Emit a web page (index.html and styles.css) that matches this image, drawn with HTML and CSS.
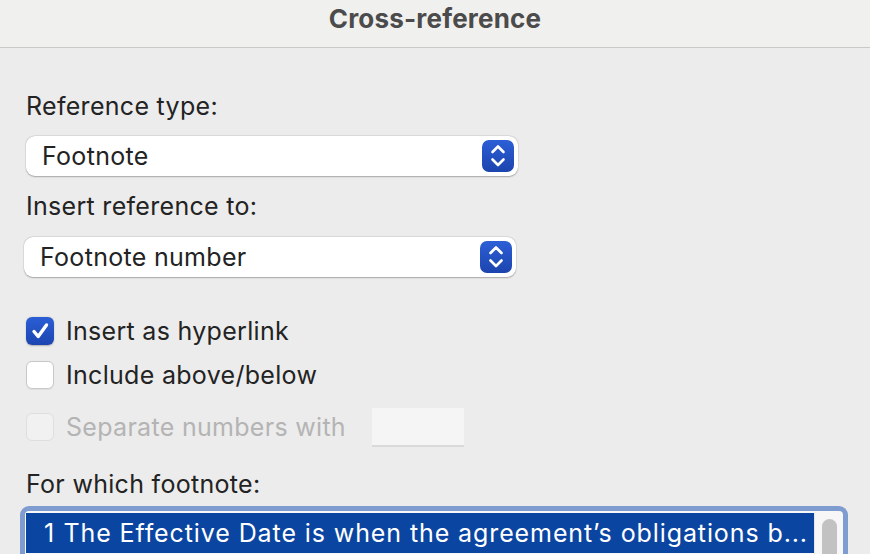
FILE: index.html
```html
<!DOCTYPE html>
<html lang="en">
<head>
<meta charset="utf-8">
<title>Cross-reference</title>
<link rel="stylesheet" href="styles.css">
</head>
<body>
<header class="titlebar">
  <h1 class="title">Cross-reference</h1>
</header>
<main class="content">
  <div class="label label-first">Reference type:</div>
  <div class="select select-1">
    <span class="select-value">Footnote</span>
    <span class="stepper">
      <svg viewBox="0 0 32 32" width="32" height="32"><path d="M10.5 12 L16 6.5 L21.5 12 M10.5 19.5 L16 25 L21.5 19.5" fill="none" stroke="#fff" stroke-width="2.6" stroke-linecap="round" stroke-linejoin="round"/></svg>
    </span>
  </div>
  <div class="label label-second">Insert reference to:</div>
  <div class="select select-2">
    <span class="select-value">Footnote number</span>
    <span class="stepper">
      <svg viewBox="0 0 32 32" width="32" height="32"><path d="M10.5 12 L16 6.5 L21.5 12 M10.5 19.5 L16 25 L21.5 19.5" fill="none" stroke="#fff" stroke-width="2.6" stroke-linecap="round" stroke-linejoin="round"/></svg>
    </span>
  </div>

  <div class="checks">
    <div class="check-row">
      <span class="box box-checked">
        <svg viewBox="0 0 28 28" width="28" height="28"><path d="M8 14.5 L12.2 19.5 L20.5 8" fill="none" stroke="#fff" stroke-width="3.4" stroke-linecap="round" stroke-linejoin="round"/></svg>
      </span>
      <span class="check-text">Insert as hyperlink</span>
    </div>
    <div class="check-row">
      <span class="box"></span>
      <span class="check-text">Include above/below</span>
    </div>
    <div class="check-row disabled">
      <span class="box box-disabled"></span>
      <span class="check-text">Separate numbers with</span>
      <span class="sep-input"></span>
    </div>
  </div>

  <div class="label label-list">For which footnote:</div>
  <div class="list">
    <div class="list-inner">
      <div class="list-rows">
        <div class="list-row selected"><span class="num">1</span><span class="row-text">The Effective Date is when the agreement’s obligations b...</span></div>
      </div>
      <div class="scrollbar"><div class="thumb"></div></div>
    </div>
  </div>
</main>
</body>
</html>
```
FILE: styles.css
```css
html, body {
  margin: 0;
  padding: 0;
  width: 870px;
  height: 554px;
  overflow: hidden;
  background: #ececec;
  font-family: Inter, "Noto Sans", "Liberation Sans", sans-serif;
  color: #232323;
}

.titlebar {
  height: 48px;
  background: #f0f0ef;
  border-bottom: 1px solid #c9c9c9;
  display: flex;
  justify-content: center;
  align-items: center;
  box-sizing: border-box;
}

.title {
  margin: 0;
  font-size: 26px;
  font-weight: 700;
  color: #4b4b4b;
  letter-spacing: 0.2px;
  position: relative;
  top: -5px;
}

.content {
  padding: 0 0 0 26px;
  font-size: 25px;
  letter-spacing: 0.3px;
}

.label {
  line-height: 28px;
  height: 28px;
}

.label-first { margin-top: 44px; }
.label-second { margin-top: 16px; }
.label-list { margin-top: 29px; }

.select {
  width: 492px;
  height: 40px;
  box-sizing: border-box;
  background: #fff;
  border-radius: 9px;
  box-shadow: 0 0.5px 1.5px rgba(0,0,0,0.28), 0 0 0 0.5px rgba(0,0,0,0.06);
  display: flex;
  align-items: center;
  justify-content: space-between;
  padding: 0 4px 0 16px;
}

.select-1 { margin-top: 16px; }
.select-2 { margin-top: 17px; margin-left: -2px; }

.stepper {
  width: 32px;
  height: 32px;
  border-radius: 7px;
  background: linear-gradient(#2c5fd6, #1c44ae);
  display: flex;
}

.checks {
  margin-top: 40px;
  display: flex;
  flex-direction: column;
  gap: 16px;
}

.check-row {
  display: flex;
  align-items: center;
  height: 28px;
  gap: 12px;
}

.check-row + .check-row.disabled { margin-top: 8px; }

.box {
  flex: none;
  width: 28px;
  height: 28px;
  box-sizing: border-box;
  border-radius: 6px;
  background: #fff;
  border: 1px solid #c8c8c8;
  box-shadow: 0 0.5px 1px rgba(0,0,0,0.06);
  display: flex;
}

.box-checked {
  border: none;
  background: linear-gradient(#2b5ed5, #1c45b0);
  box-shadow: 0 0.5px 1.5px rgba(0,0,0,0.25);
}

.box-disabled {
  background: #f1f1f1;
  border-color: #dedede;
  box-shadow: none;
}

.check-text {
  line-height: 28px;
  white-space: nowrap;
}

.disabled .check-text { color: #b4b4b4; }

.sep-input {
  flex: none;
  width: 92px;
  height: 39px;
  box-sizing: border-box;
  background: #f5f5f5;
  border-bottom: 2px solid #dadada;
  margin-left: 14px;
}

.list {
  margin-top: 8px;
  margin-left: -6px;
  width: 828px;
  height: 80px;
  box-sizing: border-box;
  border: 5px solid #7f9cd1;
  border-bottom: none;
  border-radius: 9px 9px 0 0;
  padding: 2px 1px 0 1px;
  background: #f7f7f7;
}

.list-inner {
  display: flex;
  height: 100%;
}

.list-rows {
  flex: 1;
}

.list-row {
  height: 40px;
  display: flex;
  align-items: center;
  padding-left: 18px;
  gap: 9px;
  color: #fff;
  white-space: nowrap;
  overflow: hidden;
}

.row-text { letter-spacing: 0.9px; }

.list-row.selected { background: #0b45a2; }

.scrollbar {
  flex: none;
  width: 28px;
  background: #f7f7f7;
  border-left: 1px solid #e6e6e6;
  box-sizing: border-box;
  padding: 6px 0 0 7px;
}

.thumb {
  width: 15px;
  height: 60px;
  border-radius: 8px;
  background: #c2c2c2;
}
```
